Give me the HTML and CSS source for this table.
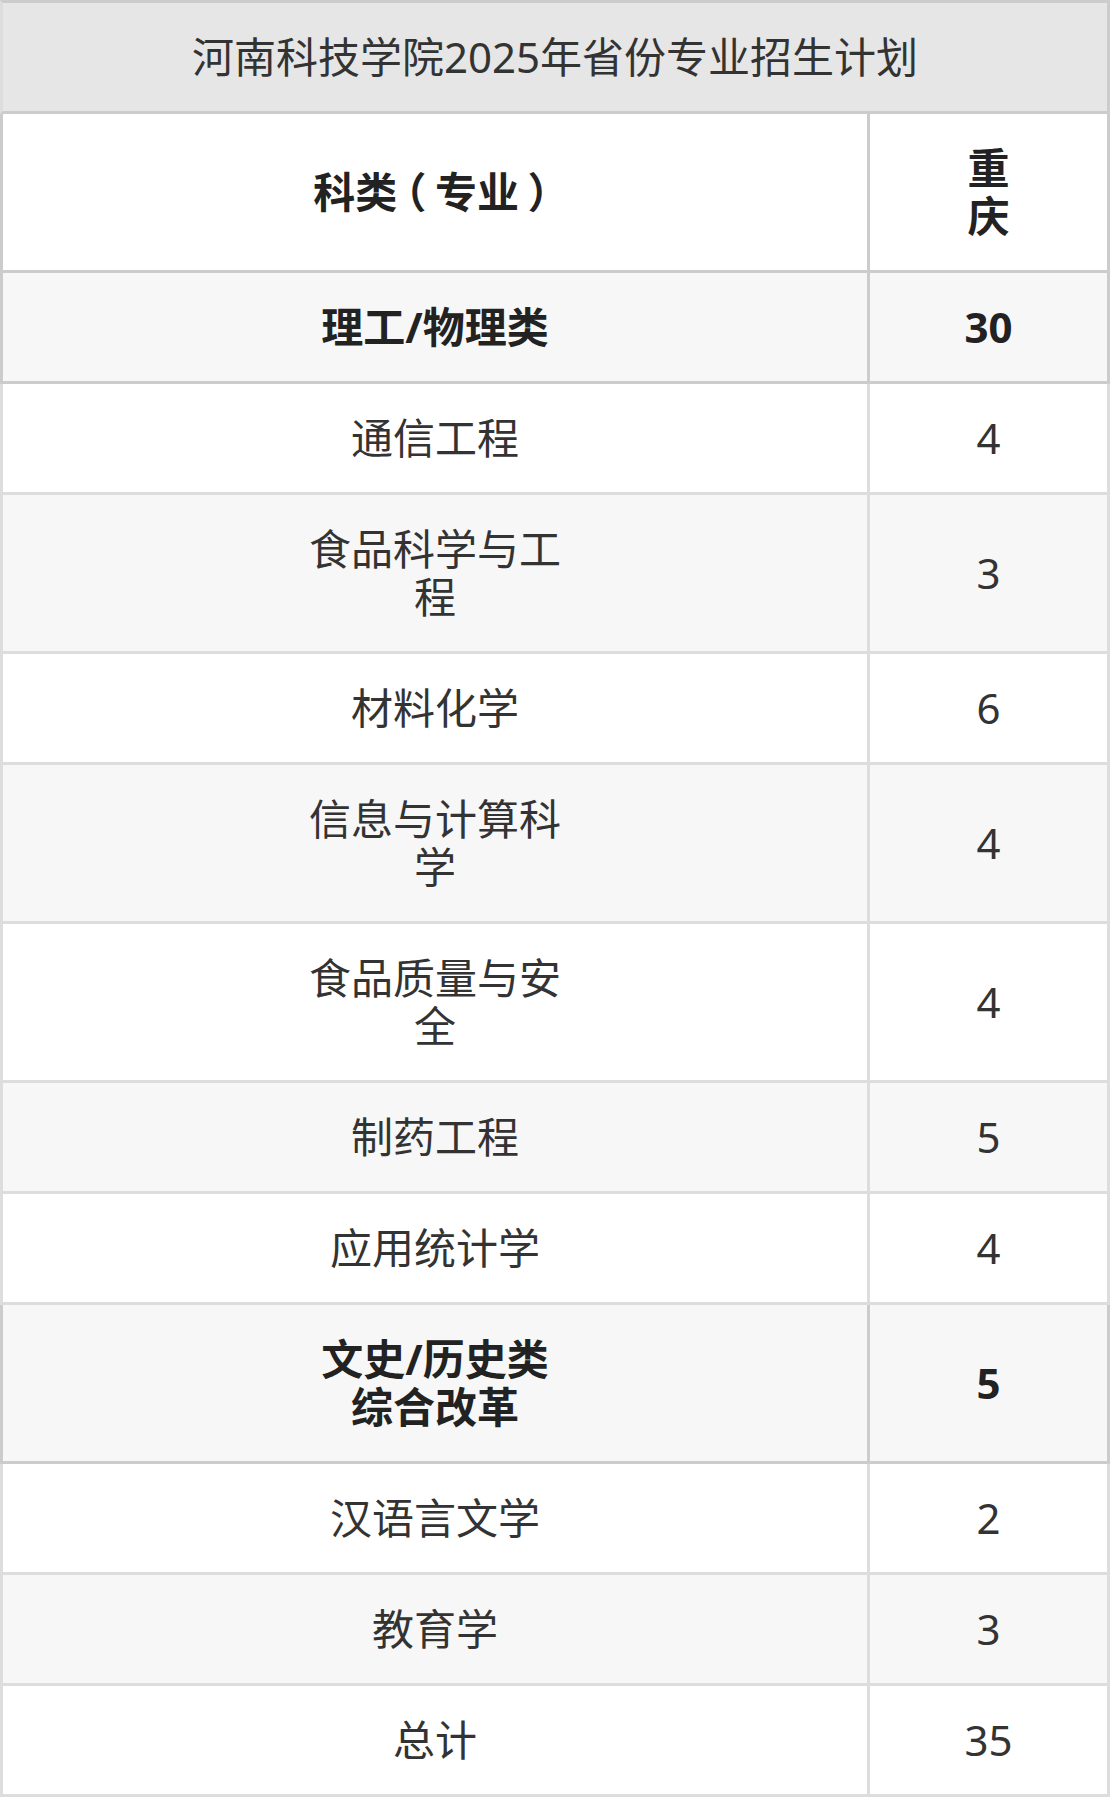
FILE: index.html
```html
<!DOCTYPE html>
<html lang="zh-CN">
<head>
<meta charset="utf-8">
<title>河南科技学院2025年省份专业招生计划</title>
<link rel="stylesheet" href="styles.css">
</head>
<body>
<table class="plan">
  <colgroup>
    <col class="col-major">
    <col class="col-num">
  </colgroup>
  <thead>
    <tr><th class="title" colspan="2">河南科技学院2025年省份专业招生计划</th></tr>
    <tr class="strong">
      <th>科类<span class="punct">（</span>专业<span class="punct">）</span></th>
      <th>重<br>庆</th>
    </tr>
  </thead>
  <tbody>
    <tr class="strong alt"><td>理工/物理类</td><td>30</td></tr>
    <tr><td>通信工程</td><td>4</td></tr>
    <tr class="alt"><td>食品科学与工<br>程</td><td>3</td></tr>
    <tr><td>材料化学</td><td>6</td></tr>
    <tr class="alt"><td>信息与计算科<br>学</td><td>4</td></tr>
    <tr><td>食品质量与安<br>全</td><td>4</td></tr>
    <tr class="alt"><td>制药工程</td><td>5</td></tr>
    <tr><td>应用统计学</td><td>4</td></tr>
    <tr class="strong alt"><td>文史/历史类<br>综合改革</td><td>5</td></tr>
    <tr><td>汉语言文学</td><td>2</td></tr>
    <tr class="alt"><td>教育学</td><td>3</td></tr>
    <tr><td>总计</td><td>35</td></tr>
  </tbody>
</table>
</body>
</html>
```

FILE: styles.css
```css
html, body {
  margin: 0;
  padding: 0;
  background: #ffffff;
}

.plan {
  width: 1110px;
  border-collapse: separate;
  border-spacing: 0;
  table-layout: fixed;
  font-family: "Noto Sans", "Noto Sans CJK SC", sans-serif;
  font-size: 42px;
  line-height: 48px;
  color: #333333;
}

.col-num {
  width: 240px;
}

.plan th,
.plan td {
  border-right: 3px solid #dddddd;
  border-bottom: 3px solid #dddddd;
  padding: 30px 0;
  text-align: center;
  vertical-align: middle;
  font-weight: normal;
}

.plan th:first-child,
.plan td:first-child {
  border-left: 3px solid #dddddd;
}

.plan .title {
  background: #e6e6e6;
  border: 3px solid #cccccc;
  color: #333333;
}

.plan tr.alt td {
  background: #f7f7f7;
}

.plan tr.strong th,
.plan tr.strong td {
  border-color: #cccccc;
  font-weight: bold;
  color: #222222;
}

.punct {
  font-feature-settings: "halt";
  padding: 0 0.2em;
}
```
